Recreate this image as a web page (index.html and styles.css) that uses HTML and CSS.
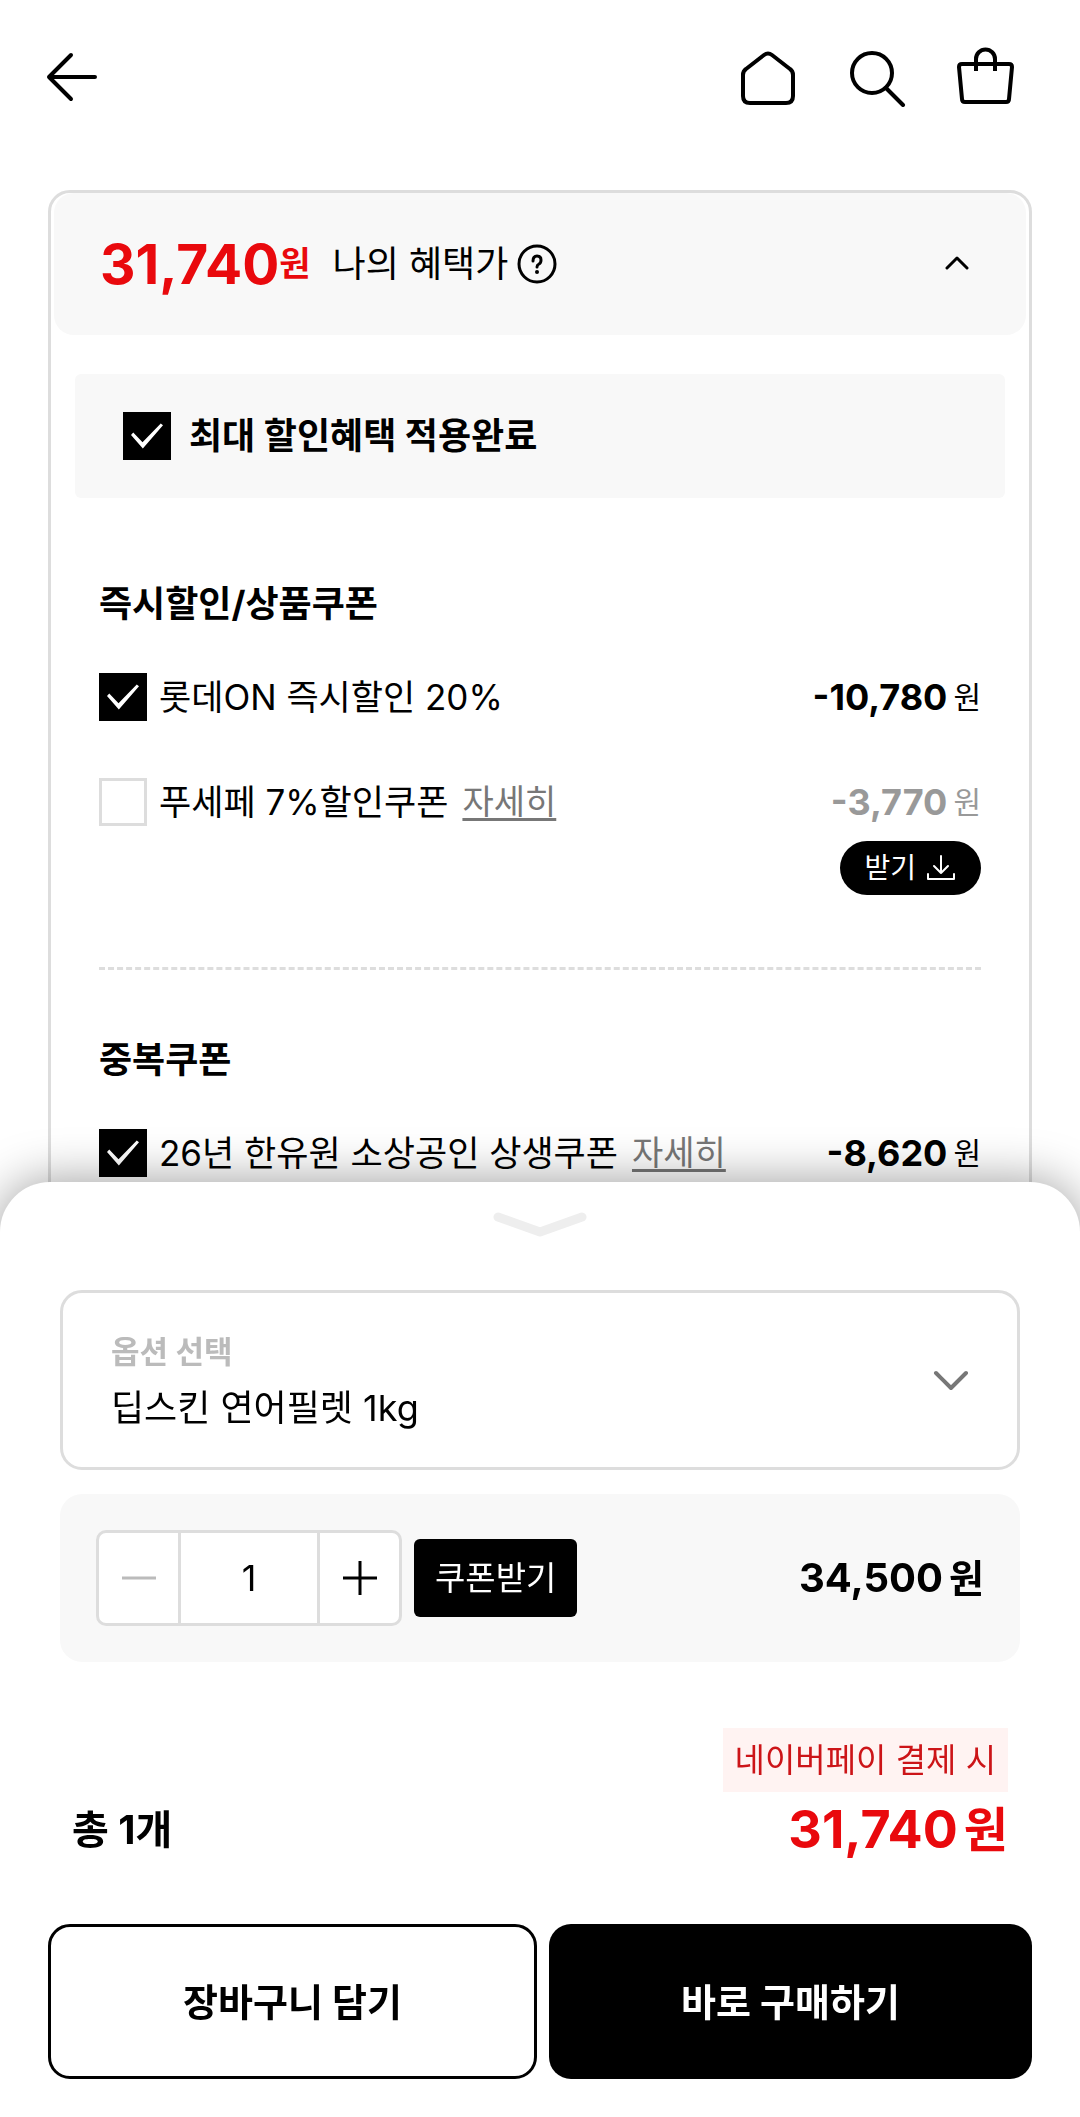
FILE: index.html
```html
<!DOCTYPE html>
<html lang="ko">
<head>
  <meta charset="UTF-8" />
  <meta name="viewport" content="width=device-width, initial-scale=1" />
  <title>나의 혜택가</title>
  <link rel="stylesheet" href="styles.css">
</head>
<body>

  <div class="page">
    <header class="top">
      <a href="#" class="back" aria-label="뒤로">
        <svg width="54" height="54" viewBox="0 0 54 54"><path d="M51 27H5M27 5L5 27l22 22" /></svg>
      </a>
      <nav class="top-menu">
        <a href="#" aria-label="홈">
          <svg width="60" height="60" viewBox="0 0 60 60"><path d="M3 28q0-4 3-6L24 8q4-3 8 0l18 14q3 2 3 6v21q0 7-7 7H10q-7 0-7-7z" /></svg>
        </a>
        <a href="#" aria-label="검색">
          <svg width="60" height="60" viewBox="0 0 60 60"><circle cx="24" cy="26" r="20" /><path d="M38 41l17 17" /></svg>
        </a>
        <a href="#" aria-label="장바구니">
          <svg width="60" height="60" viewBox="0 0 60 60"><path d="M6 17h47q3 0 3 3l-3 32q0 3-3 3H9q-3 0-3-3L3 20q0-3 3-3z" /><path class="butt" d="M20 24V12a9.500 9.500 0 0 1 19 0v12" /></svg>
        </a>
      </nav>
    </header>

    <main class="benefit">
      <div class="benefit-head">
        <p class="benefit-price">31,740<span>원</span></p>
        <h1>나의 혜택가</h1>
        <button type="button" class="help" aria-label="도움말">
          <svg width="40" height="40" viewBox="0 0 40 40"><circle cx="20" cy="20" r="18" /><path d="M16 17q0-5 4-5t4 4q0 3-2 4t-2 3" /><circle class="dot" cx="20" cy="28" r="2" /></svg>
        </button>
        <button type="button" class="fold" aria-label="접기">
          <svg width="26" height="16" viewBox="0 0 26 16"><path d="M3 12l10-10 10 10" /></svg>
        </button>
      </div>

      <div class="max-sale">
        <label><input type="checkbox" checked>최대 할인혜택 적용완료</label>
      </div>

      <section class="coupons">
        <h2>즉시할인/상품쿠폰</h2>
        <div class="coupon">
          <label><input type="checkbox" checked>롯데ON 즉시할인 20%</label>
          <p class="minus">-10,780<span>원</span></p>
        </div>
        <div class="coupon">
          <label><input type="checkbox">푸세페 7%할인쿠폰</label>
          <a href="#">자세히</a>
          <p class="minus off">-3,770<span>원</span></p>
        </div>
        <button type="button" class="download">받기
          <svg width="30" height="28" viewBox="0 0 30 28"><path d="M15 2v17M8 12l7 7 7-7M2 20v5h26v-5" /></svg>
        </button>
      </section>

      <section class="coupons">
        <h2>중복쿠폰</h2>
        <div class="coupon">
          <label><input type="checkbox" checked>26년 한유원 소상공인 상생쿠폰</label>
          <a href="#">자세히</a>
          <p class="minus">-8,620<span>원</span></p>
        </div>
      </section>
    </main>
  </div>

  <div class="sheet">
    <button type="button" class="handle" aria-label="닫기">
      <svg width="94" height="26" viewBox="0 0 94 26"><path d="M5 5l42 15L89 5" /></svg>
    </button>

    <label class="option">
      <span class="option-text">
        <span class="option-label">옵션 선택</span>
        <select>
          <option>딥스킨 연어필렛 1kg</option>
        </select>
      </span>
      <svg width="36" height="22" viewBox="0 0 36 22"><path d="M3 4l15 15L33 4" /></svg>
    </label>

    <div class="item">
      <div class="stepper">
        <button type="button" aria-label="수량 빼기" disabled>
          <svg width="36" height="36" viewBox="0 0 36 36"><path d="M1 18h34" /></svg>
        </button>
        <input type="text" value="1" inputmode="numeric" aria-label="수량">
        <button type="button" aria-label="수량 더하기">
          <svg width="36" height="36" viewBox="0 0 36 36"><path d="M1 18h34M18 1v34" /></svg>
        </button>
      </div>
      <button type="button" class="get-coupon">쿠폰받기</button>
      <p class="item-price">34,500<span>원</span></p>
    </div>

    <div class="total">
      <p class="count">총 1개</p>
      <div class="pay">
        <p class="pay-badge">네이버페이 결제 시</p>
        <p class="pay-price">31,740<span>원</span></p>
      </div>
    </div>

    <div class="actions">
      <button type="button" class="cart">장바구니 담기</button>
      <button type="button" class="buy">바로 구매하기</button>
    </div>
  </div>

</body>
</html>
```
FILE: styles.css
```css
* {
  margin: 0;
  padding: 0;
  box-sizing: border-box;
}
body {
  background: #fff;
  color: #000;
  font-family: Inter, "Noto Sans CJK KR", sans-serif;
  font-size: 36px;
  line-height: 48px;
}
button, input, select {
  font: inherit;
  color: inherit;
  background: none;
  border: none;
}
button {
  cursor: pointer;
}
svg {
  display: block;
  fill: none;
  stroke: #000;
  stroke-width: 4;
  stroke-linecap: round;
  stroke-linejoin: round;
}

/* page */
.page {
  display: flex;
  flex-direction: column;
  min-height: 100vh;
  padding: 0 48px;
}
.top {
  display: flex;
  align-items: center;
  justify-content: space-between;
  height: 190px;
  padding: 0 16px 36px 0;
}
.back {
  margin-left: -4px;
}
.top-menu {
  display: flex;
  gap: 48px;
}
.butt {
  stroke-linecap: butt;
}
.benefit {
  flex: 1;
  border: 3px solid #ddd;
  border-radius: 22px;
}
.benefit-head {
  display: flex;
  align-items: center;
  height: 142px;
  margin: 0 3px 39px;
  padding: 0 56px 0 46px;
  background: #f8f8f8;
  border-radius: 20px;
}
.benefit-price, .minus, .item-price, .pay-price {
  display: flex;
  align-items: center;
  font-weight: 700;
}
.benefit-price {
  margin-right: 22px;
  color: #e9090d;
  font-size: 55px;
}
.benefit-price span {
  font-size: 34px;
}
.benefit-head h1 {
  font-size: 36px;
  font-weight: 400;
}
.help {
  margin-left: 9px;
}
.help svg, .fold svg {
  stroke-width: 3;
}
.help .dot {
  fill: #000;
  stroke: none;
}
.fold {
  margin-left: auto;
}
.max-sale {
  margin: 0 24px 82px;
  padding: 38px 48px;
  background: #f8f8f8;
  border-radius: 6px;
  font-weight: 700;
}
.max-sale label, .coupon label {
  display: flex;
  align-items: center;
  gap: 12px;
}
.max-sale label {
  gap: 18px;
}
input[type="checkbox"] {
  appearance: none;
  display: grid;
  place-items: center;
  width: 48px;
  height: 48px;
  border: 3px solid #ddd;
}
input[type="checkbox"]:checked {
  background: #000;
  border-color: #000;
}
/* tick */
input[type="checkbox"]:checked::before {
  content: "";
  width: 32px;
  height: 26px;
  background: #fff;
  clip-path: polygon(0 46%, 7% 37%, 36% 74%, 93% 2%, 100% 9%, 37% 98%);
}
.coupons {
  margin: 0 48px;
}
.coupons + .coupons {
  padding-top: 66px;
  border-top: 3px dashed #ddd;
}
.coupons h2 {
  margin-bottom: 45px;
  font-size: 36px;
  font-weight: 700;
}
.coupon {
  display: flex;
  align-items: center;
  font-size: 35px;
}
.coupon + .coupon {
  margin-top: 57px;
}
.coupon a {
  margin-left: 14px;
  color: #777;
  font-size: 34px;
  text-decoration: underline;
  text-decoration-thickness: 3px;
  text-underline-offset: 4px;
  text-decoration-skip-ink: none;
}
.minus {
  margin-left: auto;
  font-size: 36px;
}
.minus span {
  margin-left: 6px;
  font-size: 30px;
  font-weight: 400;
}
.off {
  color: #999;
}
.download {
  display: flex;
  align-items: center;
  gap: 10px;
  height: 54px;
  margin: 15px 0 72px auto;
  padding: 0 25px 0 24px;
  background: #000;
  border-radius: 27px;
  color: #fff;
  font-size: 28px;
}
.download svg {
  stroke: #fff;
  stroke-width: 2;
}

/* bottom sheet */
.sheet {
  position: fixed;
  left: 0;
  right: 0;
  bottom: 0;
  padding: 30px 48px 38px;
  background: #fff;
  border-radius: 50px 50px 0 0;
  box-shadow: 0 0 50px rgba(0, 0, 0, 0.4);
}
.handle {
  display: block;
  margin: 0 auto 52px;
}
.handle svg {
  stroke: #eee;
  stroke-width: 9;
}
.option {
  display: flex;
  align-items: center;
  justify-content: space-between;
  height: 180px;
  margin: 0 12px 24px;
  padding: 0 48px;
  border: 3px solid #ddd;
  border-radius: 22px;
}
.option svg {
  stroke: #777;
}
.option-text {
  flex: 1;
}
.option-label {
  display: block;
  margin-bottom: 8px;
  color: #bbb;
  font-size: 31px;
  font-weight: 700;
}
.option select {
  display: block;
  appearance: none;
  width: 100%;
  font-size: 36px;
}
.item {
  display: flex;
  align-items: center;
  gap: 12px;
  margin: 0 12px 66px;
  padding: 36px;
  background: #f8f8f8;
  border-radius: 22px;
}
.stepper {
  display: flex;
  width: 306px;
  height: 96px;
  background: #fff;
  border: 3px solid #ddd;
  border-radius: 10px;
}
.stepper button {
  display: grid;
  place-items: center;
  width: 79px;
}
.stepper button svg {
  stroke-width: 3;
  stroke-linecap: butt;
}
.stepper button:disabled svg {
  stroke: #bbb;
}
.stepper input {
  flex: 1;
  min-width: 0;
  border: solid #ddd;
  border-width: 0 3px;
  text-align: center;
}
.get-coupon {
  height: 78px;
  padding: 0 21px;
  background: #000;
  border-radius: 6px;
  color: #fff;
  font-size: 33px;
}
.item-price {
  margin-left: auto;
  font-size: 40px;
}
.item-price span {
  margin-left: 6px;
  font-size: 38px;
}
.total {
  display: flex;
  align-items: flex-end;
  justify-content: space-between;
  margin-bottom: 64px;
  padding: 0 24px;
}
.count {
  font-size: 40px;
  font-weight: 700;
  line-height: 60px;
}
.pay {
  display: flex;
  flex-direction: column;
  align-items: flex-end;
  color: #e9090d;
}
.pay-badge {
  margin-bottom: 8px;
  padding: 8px 12px;
  background: #fff3f2;
  color: #cc1418;
  font-size: 33px;
}
.pay-price {
  font-size: 52px;
  line-height: 60px;
}
.pay-price span {
  margin-left: 6px;
  font-size: 48px;
}
.actions {
  display: flex;
  gap: 12px;
}
.actions button {
  flex: 1;
  height: 155px;
  border-radius: 22px;
  font-size: 38px;
  font-weight: 700;
}
.cart {
  border: 3px solid #000;
}
.buy {
  background: #000;
  color: #fff;
}
```
